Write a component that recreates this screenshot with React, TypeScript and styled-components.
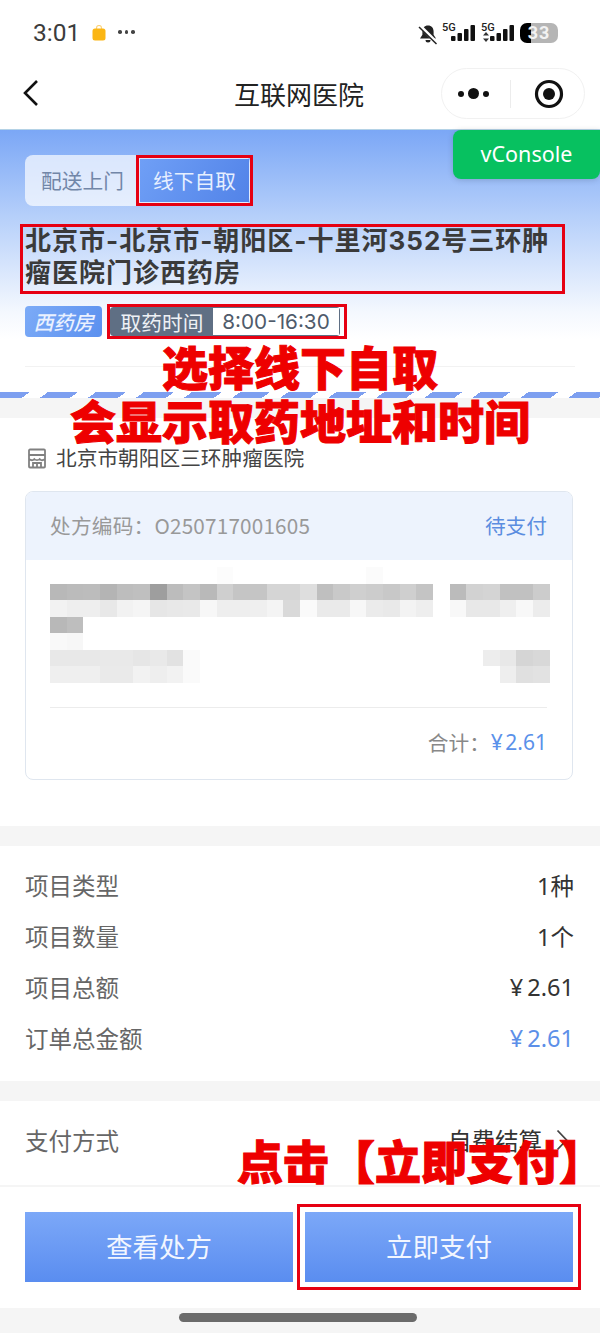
import React from "react";
import styled, { createGlobalStyle } from "styled-components";

const GlobalStyle = createGlobalStyle`
    html, body {
        margin: 0;
        padding: 0;
        background: #fff;
    }
    body {
        font-family: "Noto Sans CJK SC", "Noto Sans", sans-serif;
        overflow: hidden;
        text-spacing-trim: space-all;
    }
`;

const Page = styled.div`
    position: relative;
    width: 600px;
    height: 1333px;
    overflow: hidden;
    display: flex;
    flex-direction: column;
    background: #f5f5f5;
`;

const StatusBar = styled.div`
    height: 64px;
    padding: 14px 42px 0 33px;
    box-sizing: border-box;
    display: flex;
    align-items: flex-start;
    background: #fff;
`;

const Clock = styled.span`
    font-family: Roboto, sans-serif;
    font-size: 24.5px;
    line-height: 38px;
    color: #3c3c3c;
`;

const BagIcon = styled.svg`
    margin: 11px 0 0 12px;
`;

const MoreDots = styled.span`
    margin: 16px 0 0 12px;
    display: flex;
    gap: 3px;
    i {
        width: 3.5px;
        height: 3.5px;
        border-radius: 50%;
        background: #444;
    }
`;

const StatusIcons = styled.div`
    margin-left: auto;
    padding-top: 9px;
    display: flex;
    align-items: flex-start;
`;

const Network = styled.div`
    position: relative;
    width: 36px;
    height: 20px;
    margin-left: 3px;
    span {
        position: absolute;
        left: 0;
        top: -1px;
        font-family: Roboto, sans-serif;
        font-size: 11px;
        font-weight: 500;
        line-height: 12px;
        color: #222;
    }
    svg {
        position: absolute;
        left: 0;
        top: 0;
    }
`;

const Battery = styled.div`
    position: relative;
    width: 38px;
    height: 20px;
    margin-left: 3px;
    border-radius: 7px;
    overflow: hidden;
    background: linear-gradient(90deg, #000 30%, #b5b5b5 30%);
    font-family: Roboto, sans-serif;
    font-size: 18px;
    font-weight: 700;
    line-height: 20px;
    letter-spacing: 1px;
    text-align: center;
    color: #f2f2f2;
`;

const NavBar = styled.div`
    position: relative;
    height: 66px;
    display: flex;
    align-items: center;
    justify-content: center;
    background: #fff;
    border-bottom: 1px solid #b4d2e6;
    box-sizing: border-box;
`;

const BackIcon = styled.svg`
    position: absolute;
    left: 22px;
    top: 14px;
`;

const NavTitle = styled.div`
    font-size: 26px;
    line-height: 36px;
    margin-left: -2px;
    margin-top: -6px;
    color: #222;
`;

const Capsule = styled.div`
    position: absolute;
    left: 441px;
    top: 4px;
    width: 144px;
    height: 51px;
    box-sizing: border-box;
    border: 1px solid #f1f1f1;
    border-radius: 26px;
    display: flex;
    align-items: center;
`;

const CapsuleDots = styled.div`
    width: 68px;
    padding-left: 16px;
    box-sizing: border-box;
    display: flex;
    align-items: center;
    gap: 4px;
    i {
        width: 6px;
        height: 6px;
        border-radius: 50%;
        background: #111;
    }
    i:nth-child(2) {
        width: 11px;
        height: 11px;
    }
`;

const CapsuleDivider = styled.div`
    width: 1px;
    height: 28px;
    background: #ececec;
`;

const TargetIcon = styled.svg`
    margin-left: 23px;
`;

const Hero = styled.div`
    height: 268px;
    padding: 25px 25px 0;
    box-sizing: border-box;
    position: relative;
    background: linear-gradient(180deg, #7ba7f6 0%, #b5cffa 32%, #f4f8fe 68%, #fff 78%);
`;

const Tabs = styled.div`
    width: 225px;
    height: 51px;
    border-radius: 8px;
    background: rgba(255, 255, 255, 0.68);
    display: flex;
    align-items: center;
`;

const Tab = styled.div<{ $active?: boolean }>`
    height: ${(p) => (p.$active ? "43px" : "51px")};
    width: ${(p) => (p.$active ? "109px" : "115px")};
    padding-bottom: 2px;
    box-sizing: border-box;
    display: flex;
    align-items: center;
    justify-content: center;
    font-size: 20.7px;
    color: ${(p) => (p.$active ? "#e6efff" : "#7186a8")};
    background: ${(p) => (p.$active ? "linear-gradient(120deg, #6f9ff6, #5283e8)" : "transparent")};
    outline: ${(p) => (p.$active ? "3px solid #e60012" : "none")};
    outline-offset: 1px;
`;

const Address = styled.div`
    margin: 18px 0 0 -5px;
    width: 535px;
    height: 69px;
    padding: 1px 5px 0;
    outline: 3px solid #e60012;
    outline-offset: -3px;
    font-family: Inter, "Noto Sans CJK SC", sans-serif;
    font-size: 26px;
    font-weight: 700;
    line-height: 32px;
    letter-spacing: 1px;
    color: #3a3a3a;
`;

const TagRow = styled.div`
    margin-top: 12px;
    display: flex;
    align-items: center;
`;

const PharmacyTag = styled.div`
    width: 77px;
    height: 31px;
    border-radius: 4px;
    display: flex;
    align-items: center;
    justify-content: center;
    font-size: 20px;
    font-weight: 500;
    font-style: italic;
    color: #eaf1ff;
    background: linear-gradient(120deg, #7cabf7, #5b90ef);
`;

const PickupMark = styled.div`
    margin-left: 8px;
    padding-right: 4px;
    outline: 3px solid #e60012;
    outline-offset: 0;
`;

const PickupTime = styled.div`
    height: 29px;
    display: flex;
    border: 1px solid #5f6f84;
    border-radius: 3px;
    box-sizing: border-box;
`;

const TimeLabel = styled.div`
    width: 102px;
    display: flex;
    align-items: center;
    justify-content: center;
    background: #5f6f84;
    color: #eef1f5;
    font-size: 20.7px;
`;

const TimeValue = styled.div`
    width: 126px;
    box-sizing: border-box;
    display: flex;
    align-items: center;
    justify-content: center;
    background: #fff;
    color: #4f5b6b;
    font-family: Inter, sans-serif;
    font-size: 20.7px;
`;

const HeroDivider = styled.div`
    margin-top: 29px;
    height: 1px;
    background: #f2f2f2;
`;

const Stripe = styled.div`
    position: absolute;
    left: 0;
    right: 0;
    bottom: 0;
    height: 6px;
    background: repeating-linear-gradient(144.5deg, #7d9ff0 0 17.4px, #fff 17.4px 27.9px);
`;

const Section = styled.div<{ $height: number; $top: number }>`
    height: ${(p) => p.$height}px;
    margin-top: ${(p) => p.$top}px;
    background: #fff;
    padding: 0 25px;
    box-sizing: border-box;
    flex-shrink: 0;
`;

const Hospital = styled.div`
    padding: 24px 0 0 2px;
    height: 73px;
    box-sizing: border-box;
    display: flex;
    align-items: flex-start;
    font-size: 20.7px;
    line-height: 30px;
    color: #444;
    svg {
        margin: 6px 9px 0 0;
    }
`;

const Card = styled.div`
    width: 548px;
    height: 289px;
    box-sizing: border-box;
    border: 1px solid #dfe6ef;
    border-radius: 8px;
    overflow: hidden;
    display: flex;
    flex-direction: column;
`;

const CardHeader = styled.div`
    height: 68px;
    flex-shrink: 0;
    padding: 0 25px 3px 24px;
    box-sizing: border-box;
    display: flex;
    align-items: center;
    justify-content: space-between;
    background: #edf3fd;
    font-size: 20.7px;
    color: #999;
    span {
        letter-spacing: 0.2px;
    }
    b {
        font-weight: 400;
        font-size: 20.7px;
        color: #5b8de0;
    }
`;

const CardBody = styled.div`
    padding: 7px 24px 0;
`;

const Mosaic = styled.div`
    display: grid;
    grid-template-columns: repeat(30, 16.67px);
    grid-auto-rows: 16.5px;
`;

const MosaicCell = styled.i<{ $tone: string }>`
    background: ${(p) => p.$tone};
`;

const CardDivider = styled.div`
    margin-top: 24px;
    width: 497px;
    height: 1px;
    background: #ececec;
`;

const Total = styled.div`
    height: 68px;
    width: 497px;
    display: flex;
    align-items: center;
    justify-content: flex-end;
    font-size: 20.7px;
    color: #888;
`;

const TotalPrice = styled.span`
    margin-left: 1px;
    font-family: "Noto Sans", sans-serif;
    font-size: 21px;
    word-spacing: -3px;
    color: #5a91ea;
`;

const InfoList = styled.div`
    padding-top: 13px;
`;

const InfoRow = styled.div`
    height: 51px;
    display: flex;
    align-items: center;
    justify-content: space-between;
    font-size: 23.5px;
    color: #666;
`;

const InfoValue = styled.span<{ $accent?: boolean }>`
    font-family: "Noto Sans", "Noto Sans CJK SC", sans-serif;
    font-size: 23.5px;
    word-spacing: -2px;
    color: ${(p) => (p.$accent ? "#5c8fe8" : "#333")};
    margin-right: 1px;
`;

const PayMethod = styled.div`
    height: 78px;
    display: flex;
    align-items: center;
    justify-content: space-between;
    font-size: 23.5px;
    color: #666;
    span {
        display: flex;
        align-items: center;
        color: #333;
    }
    svg {
        margin: 0 7px 0 14px;
    }
`;

const Footer = styled.div`
    margin-top: 2px;
    height: 121px;
    flex-shrink: 0;
    padding: 25px 27px 0 25px;
    box-sizing: border-box;
    background: #fff;
    display: flex;
    justify-content: space-between;
`;

const ActionButton = styled.div<{ $marked?: boolean }>`
    width: 268px;
    height: 70px;
    padding-bottom: 3px;
    box-sizing: border-box;
    display: flex;
    align-items: center;
    justify-content: center;
    font-size: 26.5px;
    color: #f2f6ff;
    background: linear-gradient(180deg, #7ca8f8, #5a8df0);
    outline: ${(p) => (p.$marked ? "3px solid #e60012" : "none")};
    outline-offset: 5px;
`;

const HomeBar = styled.div`
    flex: 1;
    display: flex;
    justify-content: center;
    padding-top: 5px;
    padding-right: 4px;
    box-sizing: border-box;
    i {
        width: 238px;
        height: 9px;
        border-radius: 5px;
        background: #6b6b6b;
    }
`;

const VConsole = styled.div`
    position: absolute;
    left: 453px;
    top: 130px;
    width: 147px;
    height: 49px;
    padding-bottom: 3px;
    box-sizing: border-box;
    border-radius: 8px 0 8px 8px;
    background: #07c160;
    box-shadow: 0 1px 6px rgba(0, 0, 0, 0.16);
    display: flex;
    align-items: center;
    justify-content: center;
    font-family: "Noto Sans", sans-serif;
    font-size: 21.5px;
    color: #fff;
`;

const Note = styled.div<{ $left: number; $top: number }>`
    position: absolute;
    left: ${(p) => p.$left}px;
    top: ${(p) => p.$top}px;
    font-size: 46px;
    line-height: 1.2;
    font-weight: 900;
    white-space: nowrap;
    text-spacing-trim: trim-end;
    color: #ee0000;
    -webkit-text-stroke: 1px #ee0000;
`;

const hex = (v: number): string => (v === 0 ? "transparent" : `rgb(${v},${v},${v})`);

const blank = (n: number): number[] => Array(n).fill(0);

// pixelated block that hides the drug name in the picture
const mosaicRows: number[][] = [
    [...blank(10), 252, ...blank(8), 251, ...blank(10)],
    [184, 187, 188, 180, 189, 191, 158, 188, 196, 185, 207, 197, 197, 213, 213, 222, 191, 201, 207, 204, 200, 207, 196, 0, 187, 210, 212, 193, 193, 204],
    [242, 238, 238, 232, 242, 245, 230, 232, 233, 247, 238, 238, 239, 244, 217, 250, 234, 234, 247, 235, 233, 243, 238, 0, 248, 232, 232, 239, 248, 236],
    [184, 190, ...blank(28)],
    [249, 247, ...blank(28)],
    [232, 232, 232, 233, 233, 230, 233, 226, 250, ...blank(17), 237, 232, 213, 216],
    [239, 239, 239, 234, 234, 242, 238, 242, 250, ...blank(18), 238, 224, 226],
];

const infoRows: { label: string; value: string; accent?: boolean }[] = [
    { label: "项目类型", value: "1种" },
    { label: "项目数量", value: "1个" },
    { label: "项目总额", value: "¥ 2.61" },
    { label: "订单总金额", value: "¥ 2.61", accent: true },
];

const SignalBars: React.FC = () => (
    <svg width="36" height="20" viewBox="0 0 36 20">
        <rect x="9" y="13" width="4.5" height="5" rx="1" fill="#111" />
        <rect x="15.5" y="10" width="4.5" height="8" rx="1" fill="#111" />
        <rect x="22" y="6" width="4.5" height="12" rx="1" fill="#111" />
        <rect x="28.5" y="2" width="4.5" height="16" rx="1" fill="#111" />
    </svg>
);

export default function App(): React.ReactElement {
    return (
        <Page>
            <GlobalStyle />
            <StatusBar>
                <Clock>3:01</Clock>
                <BagIcon width="14" height="16" viewBox="0 0 14 16">
                    <path d="M4.5 4V3a2.5 2.5 0 0 1 5 0v1" fill="none" stroke="#fbd27a" strokeWidth="1.2" />
                    <rect x="0.5" y="3.5" width="13" height="12" rx="2.5" fill="#fbb614" />
                </BagIcon>
                <MoreDots>
                    <i />
                    <i />
                    <i />
                </MoreDots>
                <StatusIcons>
                    <svg width="22" height="22" viewBox="0 0 22 22">
                        <path d="M11 2.5c-3.6 0-5.6 2.6-5.6 6v3.2L3 15.6h16l-2.4-3.9V8.500c0-3.400-2-6-5.600-6z" fill="#222" />
                        <path d="M8.500 17h5a2.500 2.500 0 0 1-5 0z" fill="#222" />
                        <path d="M2.500 2.500 20 20" stroke="#fff" strokeWidth="3.500" />
                        <path d="M2 4 19.500 21" stroke="#222" strokeWidth="1.500" />
                    </svg>
                    <Network>
                        <SignalBars />
                        <span>5G</span>
                    </Network>
                    <Network>
                        <SignalBars />
                        <span>5G</span>
                        <svg width="8" height="10" viewBox="0 0 8 10" style={{ top: 9, left: 1 }}>
                            <path d="M4 0 7 3.500H1zM4 10 1 6.500h6z" fill="#333" />
                        </svg>
                    </Network>
                    <Battery>33</Battery>
                </StatusIcons>
            </StatusBar>

            <NavBar>
                <BackIcon width="18" height="30" viewBox="0 0 18 30">
                    <path d="M15 3 3 15l12 12" fill="none" stroke="#111" strokeWidth="2.600" />
                </BackIcon>
                <NavTitle>互联网医院</NavTitle>
                <Capsule>
                    <CapsuleDots>
                        <i />
                        <i />
                        <i />
                    </CapsuleDots>
                    <CapsuleDivider />
                    <TargetIcon width="30" height="30" viewBox="0 0 30 30">
                        <circle cx="15" cy="15" r="12.500" fill="none" stroke="#111" strokeWidth="3.200" />
                        <circle cx="15" cy="15" r="6" fill="#111" />
                    </TargetIcon>
                </Capsule>
            </NavBar>

            <Hero>
                <Tabs>
                    <Tab>配送上门</Tab>
                    <Tab $active>线下自取</Tab>
                </Tabs>
                <Address>北京市-北京市-朝阳区-十里河352号三环肿瘤医院门诊西药房</Address>
                <TagRow>
                    <PharmacyTag>西药房</PharmacyTag>
                    <PickupMark>
                        <PickupTime>
                            <TimeLabel>取药时间</TimeLabel>
                            <TimeValue>8:00-16:30</TimeValue>
                        </PickupTime>
                    </PickupMark>
                </TagRow>
                <HeroDivider />
                <Stripe />
            </Hero>

            <Section $height={408} $top={20}>
                <Hospital>
                    <svg width="20" height="21" viewBox="0 0 20 21" fill="none" stroke="#808080" strokeWidth="1.800">
                        <path d="M3 1.500h14a1 1 0 0 1 1 1v16a1 1 0 0 1-1 1H3a1 1 0 0 1-1-1v-16a1 1 0 0 1 1-1zM2 7h16M2 11c2 1.500 4 1.500 5.300 0 1.400 1.500 4 1.500 5.400 0 1.300 1.500 3.300 1.500 5.300 0M6 19.500V15h8v4.500M10 15v4.500" />
                    </svg>
                    北京市朝阳区三环肿瘤医院
                </Hospital>
                <Card>
                    <CardHeader>
                        <span>处方编码：O250717001605</span>
                        <b>待支付</b>
                    </CardHeader>
                    <CardBody>
                        <Mosaic>
                            {mosaicRows.flat().map((v, i) => (
                                <MosaicCell key={i} $tone={hex(v)} />
                            ))}
                        </Mosaic>
                        <CardDivider />
                        <Total>
                            合计：<TotalPrice>¥ 2.61</TotalPrice>
                        </Total>
                    </CardBody>
                </Card>
            </Section>

            <Section $height={235} $top={20}>
                <InfoList>
                    {infoRows.map((row) => (
                        <InfoRow key={row.label}>
                            {row.label}
                            <InfoValue $accent={row.accent}>{row.value}</InfoValue>
                        </InfoRow>
                    ))}
                </InfoList>
            </Section>

            <Section $height={84} $top={20}>
                <PayMethod>
                    支付方式
                    <span>
                        自费结算
                        <svg width="12" height="22" viewBox="0 0 12 22">
                            <path d="M1.500 1.500 10.500 11l-9 9.500" fill="none" stroke="#444" strokeWidth="1.800" />
                        </svg>
                    </span>
                </PayMethod>
            </Section>

            <Footer>
                <ActionButton>查看处方</ActionButton>
                <ActionButton $marked>立即支付</ActionButton>
            </Footer>

            <HomeBar>
                <i />
            </HomeBar>

            <VConsole>vConsole</VConsole>
            <Note $left={162} $top={338}>
                选择线下自取
            </Note>
            <Note $left={70} $top={392}>
                会显示取药地址和时间
            </Note>
            <Note $left={237} $top={1132}>
                点击【立即支付】
            </Note>
        </Page>
    );
}
